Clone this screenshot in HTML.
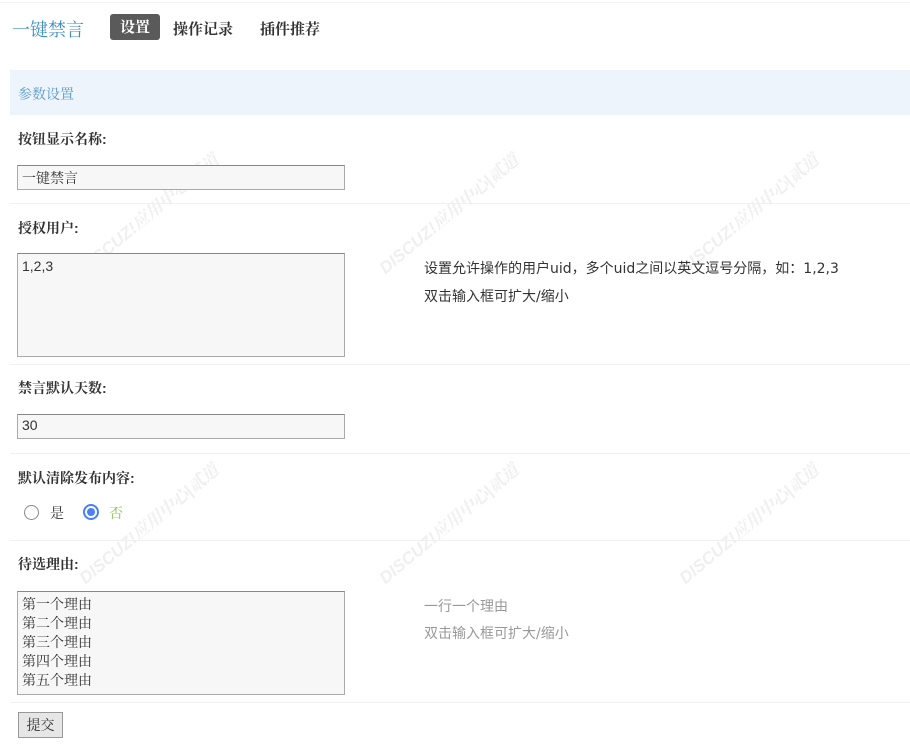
<!DOCTYPE html>
<html><head><meta charset="utf-8"><style>
body{margin:0;width:910px;height:754px;background:#fff;position:relative;overflow:hidden;font-family:"Liberation Sans","Noto Serif CJK SC","Noto Sans CJK SC",sans-serif;color:#333}
.a{position:absolute;white-space:nowrap}
.lbl{font-weight:bold;font-size:14px;color:#333;left:18px}
.inp{position:absolute;left:17px;width:328px;border:1px solid #aaa;border-top-color:#888;background:#f7f7f7;font-size:14px;box-sizing:border-box;padding:2px 4px;color:#333}
.sep{position:absolute;left:10px;right:0;height:1px;background:#f0f0f0}
.wm{position:absolute;color:#f0f0f0;font-size:17px;font-weight:bold;transform:rotate(-40deg);font-style:italic}
.hint{font-size:14px;color:#333;left:424px;font-family:"DejaVu Sans","Noto Sans CJK SC",sans-serif}
</style></head><body>
<div class="sep" style="top:2px;left:0;background:#f4f4f4"></div>
<div class="a" style="left:12px;top:16px;font-size:18px;color:#3d8ec5">一键禁言</div>
<div class="a" style="left:110px;top:14px;width:50px;height:26px;background:#5a5a5a;border-radius:3px;color:#fff;font-size:15px;font-weight:bold;text-align:center;line-height:27px">设置</div>
<div class="a" style="left:173px;top:18px;font-size:15px;font-weight:bold;color:#333">操作记录</div>
<div class="a" style="left:260px;top:18px;font-size:15px;font-weight:bold;color:#333">插件推荐</div>
<div class="a" style="left:10px;top:70px;width:900px;height:45px;background:#eef4fb"></div>
<div class="a" style="left:18px;top:84px;font-size:14px;color:#5b9bd0">参数设置</div>

<div class="wm" style="left:60px;top:200px">DISCUZ!应用中心|贰道</div>
<div class="wm" style="left:360px;top:200px">DISCUZ!应用中心|贰道</div>
<div class="wm" style="left:660px;top:200px">DISCUZ!应用中心|贰道</div>
<div class="wm" style="left:60px;top:510px">DISCUZ!应用中心|贰道</div>
<div class="wm" style="left:360px;top:510px">DISCUZ!应用中心|贰道</div>
<div class="wm" style="left:660px;top:510px">DISCUZ!应用中心|贰道</div>

<div class="a lbl" style="top:129px">按钮显示名称:</div>
<div class="inp" style="top:165px;height:25px">一键禁言</div>
<div class="sep" style="top:203px"></div>
<div class="a lbl" style="top:218px">授权用户:</div>
<div class="inp" style="top:253px;height:104px;padding-top:4px">1,2,3</div>
<div class="a hint" style="top:258px">设置允许操作的用户uid，多个uid之间以英文逗号分隔，如：1,2,3</div>
<div class="a hint" style="top:286px">双击输入框可扩大/缩小</div>
<div class="sep" style="top:364px"></div>
<div class="a lbl" style="top:378px">禁言默认天数:</div>
<div class="inp" style="top:414px;height:25px">30</div>
<div class="sep" style="top:453px"></div>
<div class="a lbl" style="top:468px">默认清除发布内容:</div>
<div class="a" style="left:24px;top:505px;width:15px;height:15px;border:1px solid #888;border-radius:50%;box-sizing:border-box"></div>
<div class="a" style="left:50px;top:503px;font-size:14px">是</div>
<div class="a" style="left:83px;top:504px;width:16px;height:16px;border:2px solid #4a80f5;border-radius:50%;box-sizing:border-box;background:#fff"><div style="position:absolute;left:2px;top:2px;width:8px;height:8px;border-radius:50%;background:#4a80f5"></div></div>
<div class="a" style="left:109px;top:503px;font-size:14px;color:#8bc34a">否</div>
<div class="sep" style="top:540px"></div>
<div class="a lbl" style="top:554px">待选理由:</div>
<div class="inp" style="top:591px;height:104px;line-height:19px;padding-top:3px">第一个理由<br>第二个理由<br>第三个理由<br>第四个理由<br>第五个理由</div>
<div class="a hint" style="top:596px;color:#999">一行一个理由</div>
<div class="a hint" style="top:623px;color:#999">双击输入框可扩大/缩小</div>
<div class="sep" style="top:702px"></div>
<div class="a" style="left:18px;top:712px;width:45px;height:26px;background:#e6e6e6;border:1px solid #999;box-sizing:border-box;font-size:14px;text-align:center;line-height:24px">提交</div>
</body></html>
